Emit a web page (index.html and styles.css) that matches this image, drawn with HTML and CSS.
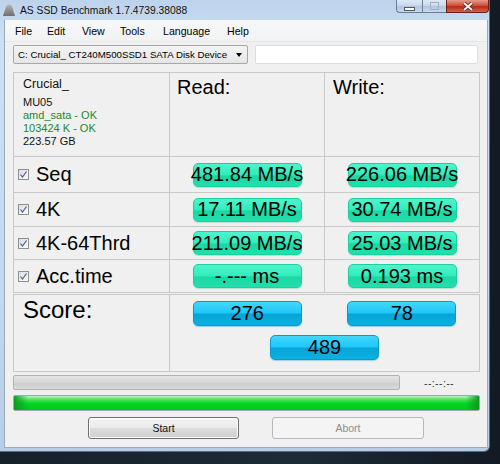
FILE: index.html
```html
<!DOCTYPE html>
<html lang="en">
<head>
  <meta charset="UTF-8" />
  <title>AS SSD Benchmark 1.7.4739.38088</title>
  <link rel="stylesheet" href="styles.css">
</head>
<body>
  <div class="desk">
    <div class="window">
      <div class="titlebar">
        <svg class="app-icon" width="14" height="12" viewBox="0 0 14 12">
          <defs>
            <linearGradient id="hd" x1="0" y1="0" x2="0" y2="1">
              <stop offset="0" stop-color="#b4b4b4"/>
              <stop offset="1" stop-color="#6e6e6e"/>
            </linearGradient>
          </defs>
          <path d="M1 12 L4 2.5 Q5 0.5 7 0.5 Q9 0.5 10 2.5 L13 12 Z" fill="url(#hd)"/>
        </svg>
        <span class="title">AS SSD Benchmark 1.7.4739.38088</span>
        <div class="controls">
          <div class="ctl min"><span></span></div>
          <div class="ctl max"><span></span></div>
          <div class="ctl close">
            <svg width="12" height="9" viewBox="0 0 12 9">
              <path d="M2 1 L10 8 M10 1 L2 8" stroke="#5a1810" stroke-width="3.2"/>
              <path d="M2 1 L10 8 M10 1 L2 8" stroke="#fff" stroke-width="1.8"/>
            </svg>
          </div>
        </div>
      </div>

      <div class="client">
        <div class="menubar">
          <span class="menu w32">File</span>
          <span class="menu w35">Edit</span>
          <span class="menu w38">View</span>
          <span class="menu w43">Tools</span>
          <span class="menu w64">Language</span>
          <span class="menu">Help</span>
        </div>

        <div class="devicebar">
          <div class="combo">
            <span>C: Crucial_ CT240M500SSD1 SATA Disk Device</span>
            <span class="arrow"></span>
          </div>
          <div class="textbox"></div>
        </div>

        <div class="results">
          <div class="cell info">
            <div class="model">Crucial_</div>
            <div>MU05</div>
            <div class="ok">amd_sata - OK</div>
            <div class="ok">103424 K - OK</div>
            <div>223.57 GB</div>
          </div>
          <div class="cell head">Read:</div>
          <div class="cell head write">Write:</div>

          <div class="cell label"><span class="check"><svg width="9" height="9" viewBox="0 0 9 9"><path d="M1.5 4.5 L3.5 7 L7.5 1.5" fill="none" stroke="#4b5d8e" stroke-width="1.2"/></svg></span>Seq</div>
          <div class="cell val"><span class="pill">481.84 MB/s</span></div>
          <div class="cell val"><span class="pill">226.06 MB/s</span></div>

          <div class="cell label"><span class="check"><svg width="9" height="9" viewBox="0 0 9 9"><path d="M1.5 4.5 L3.5 7 L7.5 1.5" fill="none" stroke="#4b5d8e" stroke-width="1.2"/></svg></span>4K</div>
          <div class="cell val"><span class="pill">17.11 MB/s</span></div>
          <div class="cell val"><span class="pill">30.74 MB/s</span></div>

          <div class="cell label"><span class="check"><svg width="9" height="9" viewBox="0 0 9 9"><path d="M1.5 4.5 L3.5 7 L7.5 1.5" fill="none" stroke="#4b5d8e" stroke-width="1.2"/></svg></span>4K-64Thrd</div>
          <div class="cell val"><span class="pill">211.09 MB/s</span></div>
          <div class="cell val"><span class="pill">25.03 MB/s</span></div>

          <div class="cell label"><span class="check"><svg width="9" height="9" viewBox="0 0 9 9"><path d="M1.5 4.5 L3.5 7 L7.5 1.5" fill="none" stroke="#4b5d8e" stroke-width="1.2"/></svg></span>Acc.time</div>
          <div class="cell val"><span class="pill">-.--- ms</span></div>
          <div class="cell val"><span class="pill">0.193 ms</span></div>
        </div>

        <div class="score">
          <div class="cell score-label">Score:</div>
          <div class="cell score-vals">
            <div class="score-row">
              <span class="pill blue">276</span>
              <span class="pill blue">78</span>
            </div>
            <span class="pill blue">489</span>
          </div>
        </div>

        <div class="progress-row">
          <div class="track"></div>
          <span class="time">--:--:--</span>
        </div>

        <div class="done-bar"></div>

        <div class="buttons">
          <button class="btn">Start</button>
          <button class="btn" disabled>Abort</button>
        </div>
      </div>
    </div>
  </div>
</body>
</html>
```

FILE: styles.css
```css
body {
  margin: 0;
  font-family: "Liberation Sans", Arial, sans-serif;
  color: #000;
  background: #16202b;
}

.desk {
  width: 500px;
  height: 464px;
  background: linear-gradient(90deg, #16202b 0, #1d2a38 60%, #121a24 100%);
  overflow: hidden;
}

.window {
  width: 490px;
  height: 452px;
  box-sizing: border-box;
  display: flex;
  flex-direction: column;
  background: linear-gradient(#bcd3ec, #cfe0f2 40px, #c3d7ed 300px, #b7cde6);
  border-right: 1px solid #596a7e;
  border-bottom: 1px solid #596a7e;
  border-bottom-right-radius: 6px;
}

/* title bar */

.titlebar {
  height: 20px;
  display: flex;
  align-items: center;
  flex-shrink: 0;
}

.app-icon {
  margin-left: 2px;
}

.title {
  margin-left: 4px;
  font-size: 10.3px;
  color: #111;
}

.controls {
  margin-left: auto;
  align-self: flex-start;
  display: flex;
  height: 14px;
}

.ctl {
  height: 13px;
  box-sizing: border-box;
  border: 1px solid #6e7e92;
  border-top: none;
  display: flex;
  align-items: center;
  justify-content: center;
  background: linear-gradient(#dfe9f5, #c9d9eb 45%, #b1c6de 55%, #c8d9ec);
}

.min {
  width: 26px;
  border-bottom-left-radius: 4px;
  border-right: none;
}

.min span {
  width: 9px;
  height: 2px;
  margin-top: 5px;
  background: #fff;
  border: 1px solid #4f5c6c;
}

.max {
  width: 24px;
  border-right: none;
}

.max span {
  width: 7px;
  height: 6px;
  border: 1px solid #9fb0c4;
  box-shadow: inset 0 2px 0 #d9e3ee;
}

.close {
  width: 43px;
  border-color: #6a2117;
  border-bottom-right-radius: 4px;
  background: linear-gradient(#e49a8a, #d2513b 45%, #bb2b19 55%, #d5614a);
}

/* client area */

.client {
  height: 428px;
  margin-left: 4px;
  width: 484px;
  box-sizing: border-box;
  border-left: 1px solid #9aaabd;
  border-right: 1px solid #9aaabd;
  border-bottom: 1px solid #9aaabd;
  background: #f0f0f0;
  display: flex;
  flex-direction: column;
}

.menubar {
  height: 22px;
  padding-left: 10px;
  display: flex;
  align-items: center;
  font-size: 10.6px;
  background: linear-gradient(#f7f8f9, #f1f2f3);
  border-bottom: 1px solid #e4e6e8;
  box-sizing: border-box;
}

.w32 { width: 32px; }
.w35 { width: 35px; }
.w38 { width: 38px; }
.w43 { width: 43px; }
.w64 { width: 64px; }

.devicebar {
  margin-top: 3px;
  display: flex;
  height: 19px;
}

.combo {
  margin-left: 8px;
  width: 235px;
  box-sizing: border-box;
  border: 1px solid #a8a8a8;
  border-radius: 2px;
  background: linear-gradient(#f4f4f4, #e6e6e6);
  display: flex;
  align-items: center;
  padding-left: 4px;
  font-size: 9.7px;
  white-space: nowrap;
}

.arrow {
  margin-left: auto;
  margin-right: 5px;
  width: 0;
  height: 0;
  border-left: 3.5px solid transparent;
  border-right: 3.5px solid transparent;
  border-top: 4px solid #000;
}

.textbox {
  margin-left: 7px;
  width: 223px;
  box-sizing: border-box;
  background: #fff;
  border: 1px solid #d9dee4;
  border-radius: 2px;
}

/* results table */

.results {
  margin-top: 8px;
  margin-left: 8px;
  width: 467px;
  display: grid;
  grid-template-columns: 155px 154px 154px;
  grid-template-rows: 83px 35px 33px 32px 32px;
  gap: 1px;
  padding: 1px;
  box-sizing: border-box;
  background: #c9c9c9;
}

.cell {
  background: #f0f0f0;
}

.info {
  padding: 4px 0 0 9px;
  font-size: 11px;
  line-height: 13px;
  color: #111;
}

.model {
  font-size: 12.5px;
  line-height: 15px;
  margin-bottom: 4px;
}

.ok {
  color: #23892b;
}

.head {
  padding: 2px 0 0 7px;
  font-size: 20px;
  line-height: 24px;
}

.write {
  padding-left: 8px;
}

.label {
  display: flex;
  align-items: center;
  padding-left: 4px;
  font-size: 20px;
}

.check {
  width: 11px;
  height: 11px;
  box-sizing: border-box;
  margin-right: 7px;
  border: 1px solid #8e8f8f;
  background: linear-gradient(135deg, #dcdee2, #fbfbfb);
  display: flex;
  align-items: center;
  justify-content: center;
}

.val {
  display: flex;
  align-items: center;
  justify-content: center;
}

.pill {
  width: 109px;
  height: 24px;
  box-sizing: border-box;
  display: flex;
  align-items: center;
  justify-content: center;
  white-space: nowrap;
  font-size: 20px;
  border-radius: 5px;
  border: 1px solid #1bd09c;
  background: linear-gradient(#4ff4cc, #30ecbc 50%, #1ad7a3 54%, #22e0ae);
  box-shadow: 0 1px 1px rgba(60, 200, 160, 0.35);
}

/* score */

.score {
  margin-top: 1px;
  margin-left: 8px;
  width: 467px;
  height: 78px;
  display: grid;
  grid-template-columns: 155px 1fr;
  gap: 1px;
  padding: 1px;
  box-sizing: border-box;
  background: #c9c9c9;
}

.score-label {
  padding: 1px 0 0 9px;
  font-size: 24px;
  line-height: 28px;
}

.score-vals {
  padding-top: 6px;
  display: flex;
  flex-direction: column;
  align-items: center;
  gap: 9px;
}

.score-row {
  width: 100%;
  display: grid;
  grid-template-columns: 1fr 1fr;
  justify-items: center;
}

.pill.blue {
  height: 25px;
  border-color: #069bcc;
  background: linear-gradient(#44d6fc, #1ec7f6 48%, #07a4d6 52%, #0cb0e2);
  box-shadow: 0 1px 1px rgba(0, 150, 210, 0.35);
}

/* progress */

.progress-row {
  margin-top: 3px;
  margin-left: 8px;
  height: 15px;
  display: flex;
  align-items: center;
}

.track {
  width: 387px;
  height: 15px;
  box-sizing: border-box;
  border: 1px solid #b2b2b2;
  border-radius: 2px;
  background: linear-gradient(#e4e4e4, #d6d6d6 50%, #cdcdcd 51%, #d9d9d9);
}

.time {
  margin-left: 24px;
  font-size: 10.5px;
  color: #333;
  letter-spacing: 0.4px;
}

.done-bar {
  margin-top: 5px;
  margin-left: 8px;
  width: 467px;
  height: 16px;
  box-sizing: border-box;
  border: 1px solid #a6a6a6;
  border-radius: 2px;
  background:
    linear-gradient(90deg, #0d9a1f 0, rgba(0, 214, 40, 0) 14px, rgba(0, 214, 40, 0) 452px, #0b9a1c 465px),
    linear-gradient(#b9f5b9, #3fe04d 30%, #00d321 55%, #00c91c);
}

/* buttons */

.buttons {
  margin-top: 6px;
  margin-left: 83px;
  display: flex;
  gap: 33px;
}

.btn {
  width: 151px;
  height: 22px;
  padding: 0;
  font-family: "Liberation Sans", Arial, sans-serif;
  font-size: 10.5px;
  color: #111;
  border: 1px solid #707070;
  border-radius: 3px;
  background: linear-gradient(#f4f4f4, #ebebeb 48%, #dddddd 52%, #cfcfcf);
  box-shadow: inset 0 0 0 1px #fcfcfc;
}

.btn:disabled {
  width: 152px;
  color: #8d8d8d;
  border-color: #b5b9bd;
  background: #f4f4f4;
  box-shadow: none;
}
```
